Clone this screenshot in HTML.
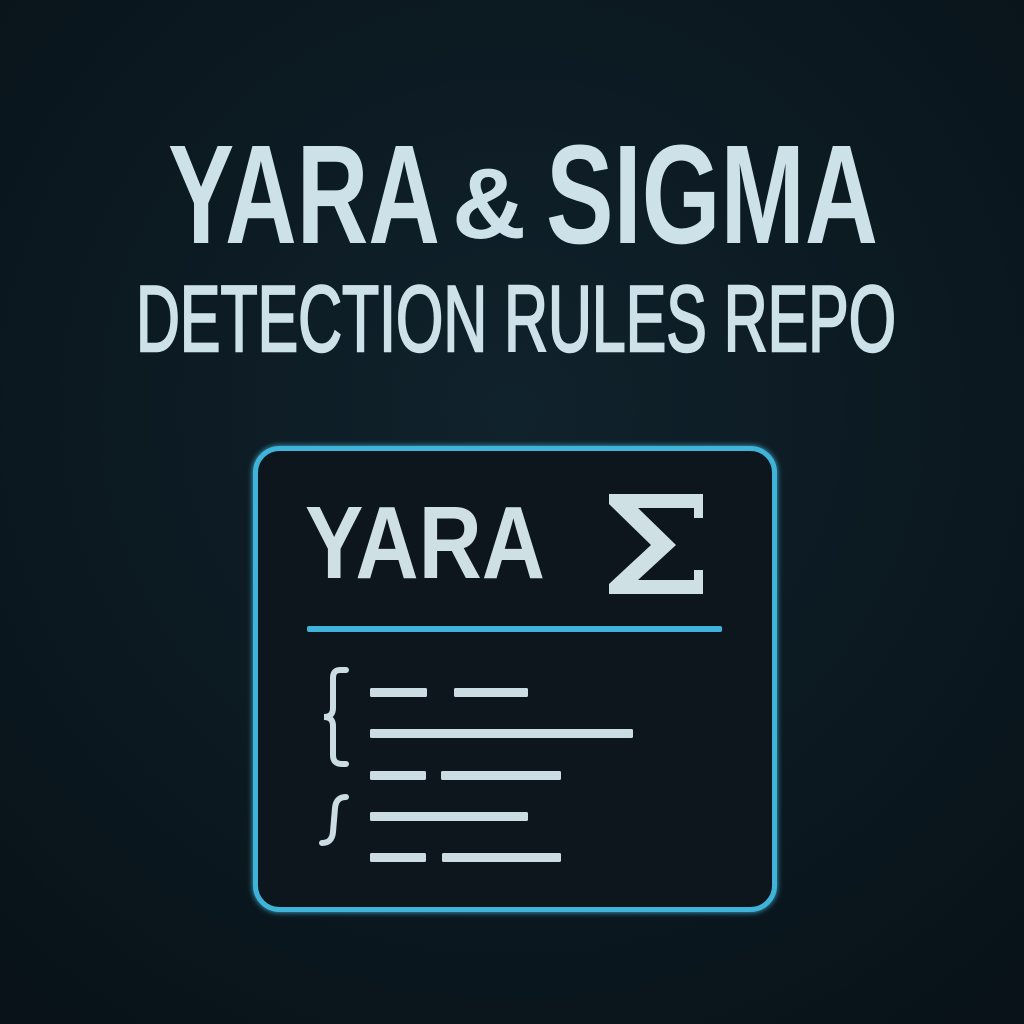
<!DOCTYPE html>
<html><head><meta charset="utf-8"><style>
html,body{margin:0;padding:0;width:1024px;height:1024px;overflow:hidden;background:#0b1820}
</style></head><body>
<svg width="1024" height="1024" viewBox="0 0 1024 1024" xmlns="http://www.w3.org/2000/svg">
<defs>
<radialGradient id="bg" cx="50%" cy="40%" r="75%">
<stop offset="0" stop-color="#10222c"/><stop offset="1" stop-color="#081218"/>
</radialGradient>
<filter id="glow" x="-20%" y="-20%" width="140%" height="140%"><feGaussianBlur stdDeviation="3" result="b"/><feMerge><feMergeNode in="b"/><feMergeNode in="SourceGraphic"/></feMerge></filter>
</defs>
<rect width="1024" height="1024" fill="url(#bg)"/>
<g fill="#cde2e8" font-family="Liberation Sans, sans-serif">
<text x="168" y="243" font-size="141" font-weight="bold" textLength="272" lengthAdjust="spacingAndGlyphs">YARA</text>
<text x="452" y="238" font-size="100" font-weight="bold" textLength="74" lengthAdjust="spacingAndGlyphs">&amp;</text>
<text x="546" y="243" font-size="141" font-weight="bold" textLength="332" lengthAdjust="spacingAndGlyphs">SIGMA</text>
<text x="136" y="351" font-size="94" stroke="#cde2e8" stroke-width="2.5" textLength="760" lengthAdjust="spacingAndGlyphs">DETECTION RULES REPO</text>
</g>
<rect x="255.5" y="448.5" width="519" height="461" rx="24" fill="#09171f" stroke="#3fb3d9" stroke-width="5" filter="url(#glow)"/>
<text x="305" y="578" font-family="Liberation Sans, sans-serif" font-size="103" font-weight="bold" fill="#cfe0e4" textLength="240" lengthAdjust="spacingAndGlyphs">YARA</text>
<path d="M609 494 H703 V518 H694 V508 H638 L676 545 L638 580 H694 V570 H703 V594 H609 V584 L651 545 L609 504 Z" fill="#cfe0e4"/>
<rect x="307" y="626" width="415" height="6" rx="2" fill="#3fb3d9"/>
<g fill="#cbdde2">
<rect x="370" y="688" width="57" height="9" rx="1.5"/><rect x="454" y="688" width="74" height="9" rx="1.5"/>
<rect x="370" y="729" width="263" height="9" rx="1.5"/>
<rect x="370" y="771" width="56" height="9" rx="1.5"/><rect x="441" y="771" width="120" height="9" rx="1.5"/>
<rect x="370" y="812" width="158" height="9" rx="1.5"/>
<rect x="370" y="853" width="56" height="9" rx="1.5"/><rect x="442" y="853" width="119" height="9" rx="1.5"/>
</g>
<g fill="none" stroke="#cbdde2" stroke-width="6" stroke-linecap="round">
<path d="M346 670 H340 Q333 670 333 678 V708 Q333 717 324 717 Q333 717 333 726 V755 Q333 764 342 764 H346"/>
<path d="M346 797 Q336 797 335 808 L333 832 Q332 843 322 843"/>
</g>
</svg>
</body></html>
